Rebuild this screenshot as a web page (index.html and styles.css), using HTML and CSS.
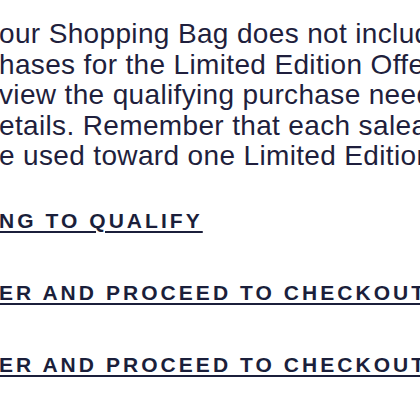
FILE: index.html
```html
<!DOCTYPE html>
<html lang="en">
<head>
<meta charset="utf-8">
<title>Shopping Bag</title>
<link rel="stylesheet" href="styles.css">
</head>
<body>
<main class="notice">
  <p class="message">our Shopping Bag does not include any<br>hases for the Limited Edition Offer. Please<br>view the qualifying purchase needed for<br>etails. Remember that each saleable item<br>e used toward one Limited Edition Offer.</p>
  <nav class="actions">
    <a class="action" href="#">NG TO QUALIFY</a>
    <a class="action" href="#">ER AND PROCEED TO CHECKOUT</a>
    <a class="action" href="#">ER AND PROCEED TO CHECKOUT</a>
  </nav>
</main>
</body>
</html>
```
FILE: styles.css
```css
html, body {
  margin: 0;
  padding: 0;
  background: #ffffff;
  overflow: hidden;
}

body {
  width: 420px;
  height: 420px;
  font-family: "Liberation Sans", Arial, sans-serif;
  color: #1f1f3d;
}

.notice {
  padding-top: 19px;
  margin-left: -1px;
  display: flex;
  flex-direction: column;
  gap: 37px;
}

.message {
  margin: 0;
  font-size: 28px;
  line-height: 30.5px;
  letter-spacing: 0.35px;
  white-space: nowrap;
}

.actions {
  display: flex;
  flex-direction: column;
  align-items: flex-start;
  gap: 48px;
}

.action {
  display: block;
  font-size: 21px;
  line-height: 24px;
  font-weight: bold;
  letter-spacing: 3.05px;
  white-space: nowrap;
  color: #1b1f3b;
  text-decoration: underline;
  text-decoration-thickness: 2px;
  text-underline-offset: 3px;
}
```
